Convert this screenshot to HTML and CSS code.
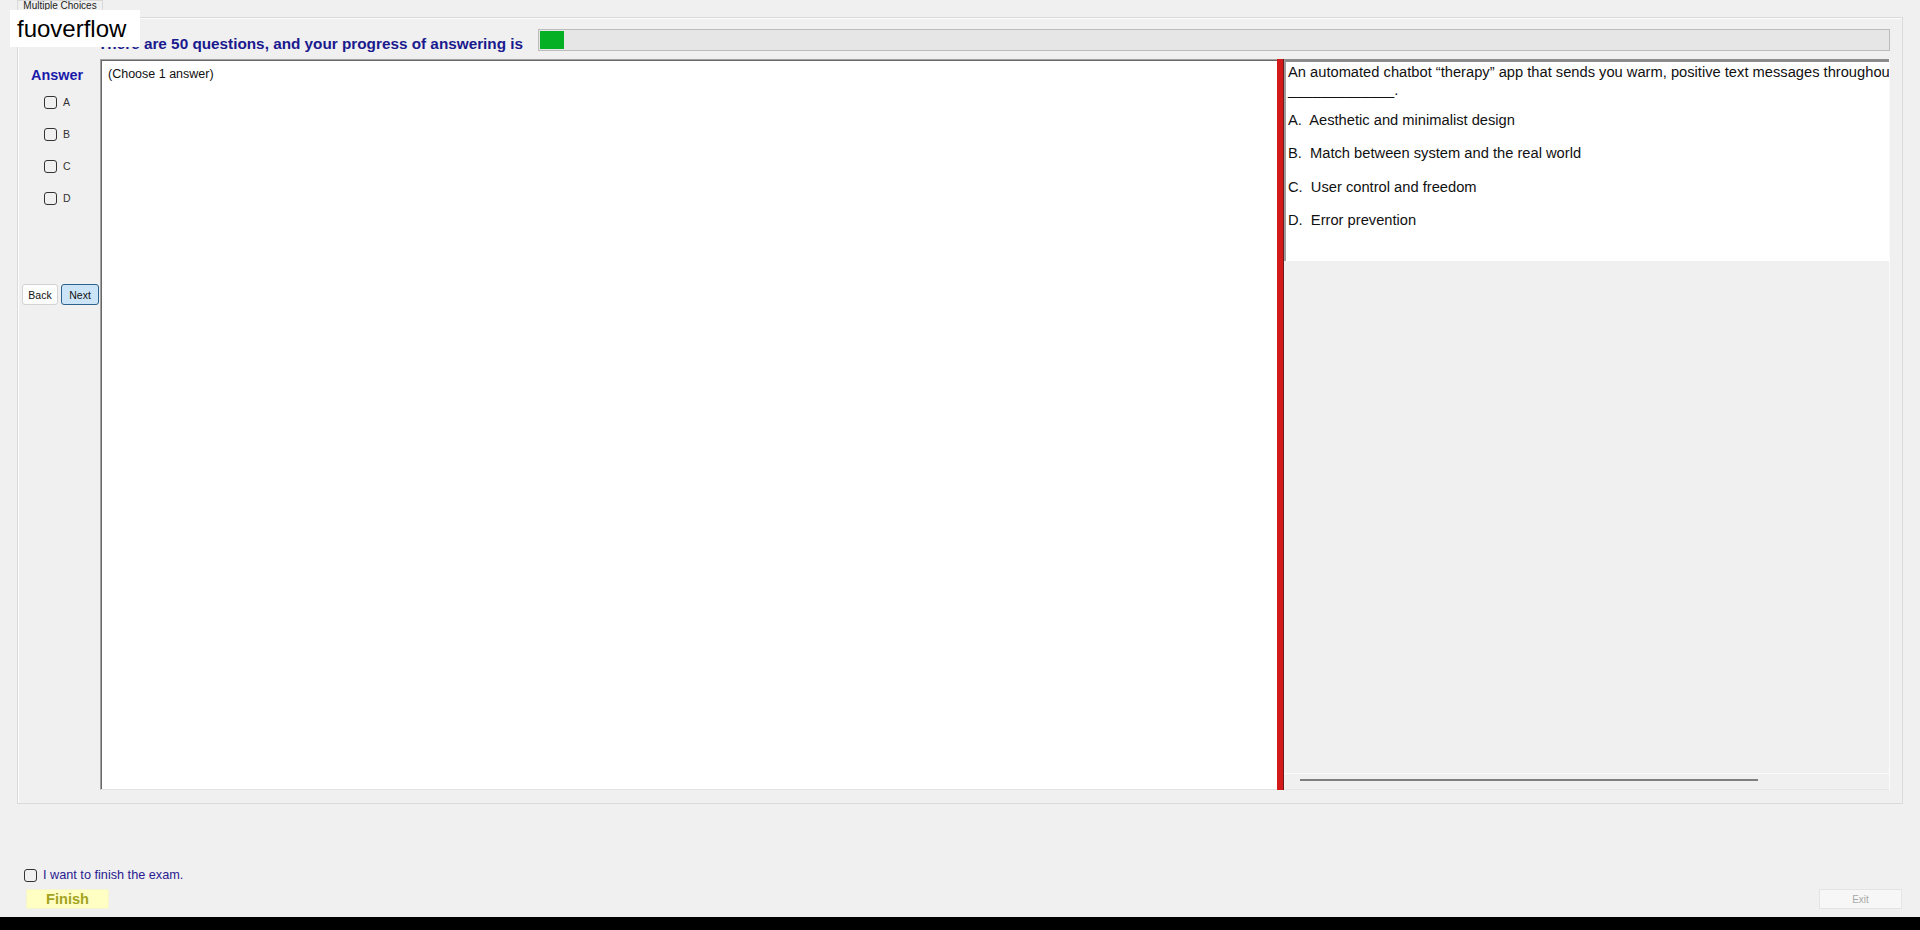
FILE: index.html
```html
<!DOCTYPE html>
<html lang="en">
<head>
<meta charset="utf-8">
<title>Multiple Choices</title>
<link rel="stylesheet" href="styles.css">
</head>
<body>
<div class="window">
  <div class="tabstrip"><div class="tab">Multiple Choices</div></div>
  <div class="tabpage">
    <div class="header">
      <div class="title">There are 50 questions, and your progress of answering is</div>
      <div class="progress"><div class="progress-fill" style="width:24px"></div></div>
    </div>
    <div class="content">
      <div class="answer-col">
        <div class="answer-title">Answer</div>
        <ul class="choices">
          <li class="choice"><span class="box"></span><span class="choice-label">A</span></li>
          <li class="choice"><span class="box"></span><span class="choice-label">B</span></li>
          <li class="choice"><span class="box"></span><span class="choice-label">C</span></li>
          <li class="choice"><span class="box"></span><span class="choice-label">D</span></li>
        </ul>
        <div class="nav">
          <button class="btn btn-back">Back</button>
          <button class="btn btn-next">Next</button>
        </div>
      </div>
      <div class="work-panel">
        <div class="hint">(Choose 1 answer)</div>
      </div>
      <div class="splitter"></div>
      <div class="question-panel">
        <div class="question-box">
          <p class="q-line q-first">An automated chatbot “therapy” app that sends you warm, positive text messages throughout the day, even when you are offline, best illustrates the heuristic of</p>
          <p class="q-line q-second">_____________.</p>
          <ul class="options">
            <li class="option">A.  Aesthetic and minimalist design</li>
            <li class="option">B.  Match between system and the real world</li>
            <li class="option">C.  User control and freedom</li>
            <li class="option">D.  Error prevention</li>
          </ul>
        </div>
        <div class="question-spacer"></div>
        <div class="hscroll"><div class="hscroll-thumb"></div></div>
      </div>
    </div>
  </div>
  <div class="footer">
    <div class="finish-group">
      <div class="confirm"><span class="box"></span><span class="confirm-label">I want to finish the exam.</span></div>
      <button class="btn-finish">Finish</button>
    </div>
    <button class="btn-exit">Exit</button>
  </div>
</div>
<div class="taskbar"></div>
<div class="watermark">fuoverflow</div>
</body>
</html>
```
FILE: styles.css
```css
html, body {
  margin: 0;
  padding: 0;
}

body {
  width: 1920px;
  height: 930px;
  overflow: hidden;
  background: #f0f0f0;
  font-family: "Liberation Sans", Arial, sans-serif;
  color: #111;
  display: flex;
  flex-direction: column;
  position: relative;
}

.window {
  flex: 1;
  display: flex;
  flex-direction: column;
}

/* tab strip */
.tabstrip {
  height: 17px;
  padding-left: 17px;
  display: flex;
}

.tab {
  width: 86px;
  height: 17px;
  box-sizing: border-box;
  border: 1px solid #d9d9d9;
  border-bottom: none;
  background: #f0f0f0;
  font-size: 10px;
  line-height: 10px;
  color: #222;
  text-align: center;
  overflow: hidden;
  white-space: nowrap;
}

.tabpage {
  margin-left: 17px;
  width: 1886px;
  height: 787px;
  box-sizing: border-box;
  border: 1px solid #dadada;
  box-shadow: inset 1px 1px 0 #fdfdfd;
  display: flex;
  flex-direction: column;
}

/* header */
.header {
  height: 41px;
  flex: none;
  display: flex;
  padding: 0 12px 0 80px;
  box-sizing: border-box;
}

.title {
  margin-top: 17px;
  font-size: 15.3px;
  line-height: 18px;
  font-weight: bold;
  color: #1a1a8e;
  white-space: nowrap;
}

.progress {
  flex: 1;
  margin: 11px 0 0 15px;
  height: 22px;
  box-sizing: border-box;
  border: 1px solid #bcbcbc;
  background: #e6e6e6;
  padding: 1px 0 1px 1px;
}

.progress-fill {
  height: 100%;
  background: #06b025;
}

/* content row */
.content {
  height: 731px;
  flex: none;
  display: flex;
}

.answer-col {
  width: 82px;
  flex: none;
  display: flex;
  flex-direction: column;
}

.answer-title {
  margin: 7px 0 0 13px;
  font-size: 14.4px;
  line-height: 18px;
  font-weight: bold;
  color: #1a1aaa;
}

.choices {
  list-style: none;
  margin: 2px 0 0 0;
  padding: 0;
}

.choice {
  height: 32px;
  display: flex;
  align-items: center;
  padding-left: 26px;
  gap: 6px;
}

.box {
  width: 13px;
  height: 13px;
  box-sizing: border-box;
  border: 1px solid #333;
  border-radius: 3px;
  flex: none;
}

.choice-label {
  font-size: 10.5px;
  color: #333;
}

.nav {
  margin: 70px 0 0 4px;
  display: flex;
  gap: 3px;
}

.btn {
  height: 21px;
  padding: 0;
  box-sizing: border-box;
  font-family: inherit;
  font-size: 10.5px;
  color: #111;
  border: 1px solid #d3d3d3;
  background: #fdfdfd;
  border-radius: 3px;
}

.btn-back {
  width: 36px;
}

.btn-next {
  width: 38px;
  background: #cce4f7;
  border-color: #2c628b;
}

.work-panel {
  width: 1177px;
  flex: none;
  box-sizing: border-box;
  background: #fff;
  border-top: 1px solid #a0a0a0;
  border-left: 1px solid #a0a0a0;
  border-bottom: 1px solid #e3e3e3;
  box-shadow: inset 1px 1px 0 #696969;
  padding: 7px 7px;
}

.hint {
  font-size: 12.5px;
  line-height: 15px;
  color: #111;
}

.splitter {
  width: 6px;
  flex: none;
  background: #d21a1a;
  border-right: 1px solid #6e1a1a;
}

.question-panel {
  flex: 1;
  margin-right: 12px;
  display: flex;
  flex-direction: column;
  border-right: 1px solid #fbfbfb;
  min-width: 0;
}

.question-box {
  height: 202px;
  flex: none;
  box-sizing: border-box;
  background: #fff;
  border-top: 3px solid #8c8c8c;
  border-left: 2px solid #a0a0a0;
  padding: 2px 0 0 2px;
  overflow: hidden;
}

.q-line {
  margin: 0;
  font-size: 14.7px;
  line-height: 19px;
  white-space: nowrap;
  color: #111;
}

.q-first {
  line-height: 17px;
}

.q-second {
  line-height: 18px;
}

.options {
  list-style: none;
  margin: 5px 0 0 0;
  padding: 0;
}

.option {
  font-size: 14.7px;
  line-height: 33.4px;
  white-space: pre;
  color: #111;
}

.question-spacer {
  flex: 1;
}

.hscroll {
  height: 17px;
  flex: none;
  box-sizing: border-box;
  border-top: 1px solid #fafafa;
  border-bottom: 1px solid #e6e6e6;
  padding: 5px 0 0 16px;
}

.hscroll-thumb {
  width: 458px;
  height: 2px;
  background: #7f7f7f;
}

/* footer */
.footer {
  height: 113px;
  flex: none;
  display: flex;
  justify-content: space-between;
  align-items: flex-end;
  padding: 0 18px 8px 24px;
  box-sizing: border-box;
}

.finish-group {
  display: flex;
  flex-direction: column;
  align-items: flex-start;
}

.confirm {
  display: flex;
  align-items: center;
  gap: 6px;
  height: 15px;
}

.confirm-label {
  font-size: 12.7px;
  line-height: 15px;
  color: #2a2090;
}

.btn-finish {
  margin: 6px 0 0 2px;
  width: 83px;
  height: 20px;
  padding: 0;
  box-sizing: border-box;
  border: 1px solid #f5f5d2;
  background: #ffffc4;
  font-family: inherit;
  font-size: 14.6px;
  font-weight: bold;
  color: #a3a320;
}

.btn-exit {
  width: 83px;
  height: 20px;
  padding: 0;
  box-sizing: border-box;
  border: 1px solid #e4e4e4;
  background: #f7f7f7;
  font-family: inherit;
  font-size: 10px;
  color: #a8a8a8;
}

.taskbar {
  height: 13px;
  flex: none;
  background: #000;
}

/* overlay watermark */
.watermark {
  position: absolute;
  left: 10px;
  top: 10px;
  width: 130px;
  height: 37px;
  box-sizing: border-box;
  padding-left: 7px;
  background: #fff;
  font-size: 24px;
  line-height: 37px;
  color: #000;
}
```
